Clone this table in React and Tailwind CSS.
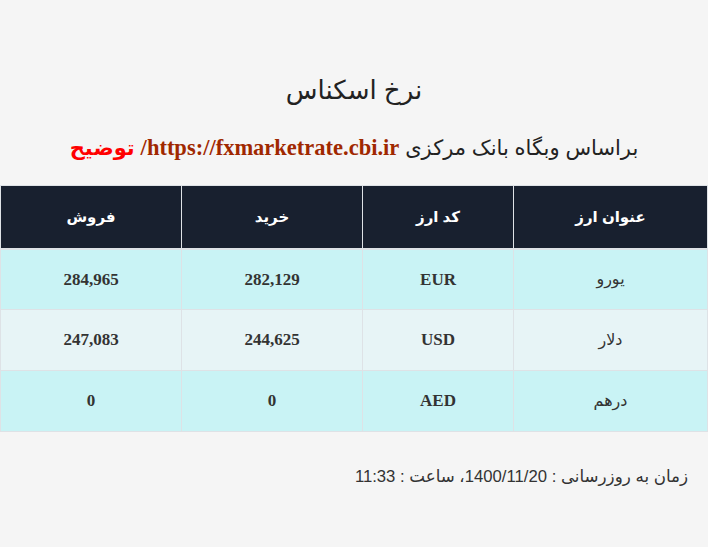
import React from "react";

const rows = [
  { name: "یورو", code: "EUR", buy: "282,129", sell: "284,965", bg: "bg-[#c9f3f5]" },
  { name: "دلار", code: "USD", buy: "244,625", sell: "247,083", bg: "bg-[#e7f4f6]" },
  { name: "درهم", code: "AED", buy: "0", sell: "0", bg: "bg-[#c9f3f5]" },
];

const serif = { fontFamily: '"Liberation Serif", serif' };

export default function App() {
  return (
    <div
      dir="rtl"
      className="min-h-[547px] w-[708px] bg-[#f5f5f5] text-[#333] pt-[70px]"
      style={{ fontFamily: '"Liberation Sans", "DejaVu Sans", sans-serif' }}
    >
      <h1 className="text-center text-[26px] leading-[40px] font-normal text-[#222]">نرخ اسکناس</h1>
      <p className="mt-[19px] text-center text-[21px] leading-[38px] text-[#222]">
        براساس وبگاه بانک مرکزی{" "}
        <a className="font-bold text-[22.5px] text-[#a02800]" style={serif}>
          https://fxmarketrate.cbi.ir/
        </a>{" "}
        <span className="font-bold text-[#ff0000]">توضیح</span>
      </p>
      <table className="mt-[18px] w-full border-collapse border border-[#dee2e6] table-fixed">
        <colgroup>
          <col className="w-[194px]" />
          <col className="w-[151px]" />
          <col className="w-[181px]" />
          <col className="w-[181px]" />
        </colgroup>
        <thead>
          <tr className="h-[63px] bg-[#18202f] text-white border-b-2 border-[#dee2e6]">
            <th className="border-x border-[#dee2e6] text-[15px] font-bold">عنوان ارز</th>
            <th className="border-x border-[#dee2e6] text-[15px] font-bold">کد ارز</th>
            <th className="border-x border-[#dee2e6] text-[15px] font-bold">خرید</th>
            <th className="border-x border-[#dee2e6] text-[15px] font-bold">فروش</th>
          </tr>
        </thead>
        <tbody>
          {rows.map((r) => (
            <tr key={r.code} className={`h-[61px] ${r.bg}`}>
              <td className="border border-[#dee2e6] text-center text-[16px] text-[#333]">{r.name}</td>
              <td className="border border-[#dee2e6] text-center text-[17px] font-bold text-[#333]" style={serif}>
                {r.code}
              </td>
              <td className="border border-[#dee2e6] text-center text-[17px] font-bold text-[#333]" style={serif}>
                {r.buy}
              </td>
              <td className="border border-[#dee2e6] text-center text-[17px] font-bold text-[#333]" style={serif}>
                {r.sell}
              </td>
            </tr>
          ))}
        </tbody>
      </table>
      <p className="mt-[33px] pr-[20px] text-[16.7px] leading-[24px] text-[#333]">
        زمان به روزرسانی : 1400/11/20، ساعت : 11:33
      </p>
    </div>
  );
}
